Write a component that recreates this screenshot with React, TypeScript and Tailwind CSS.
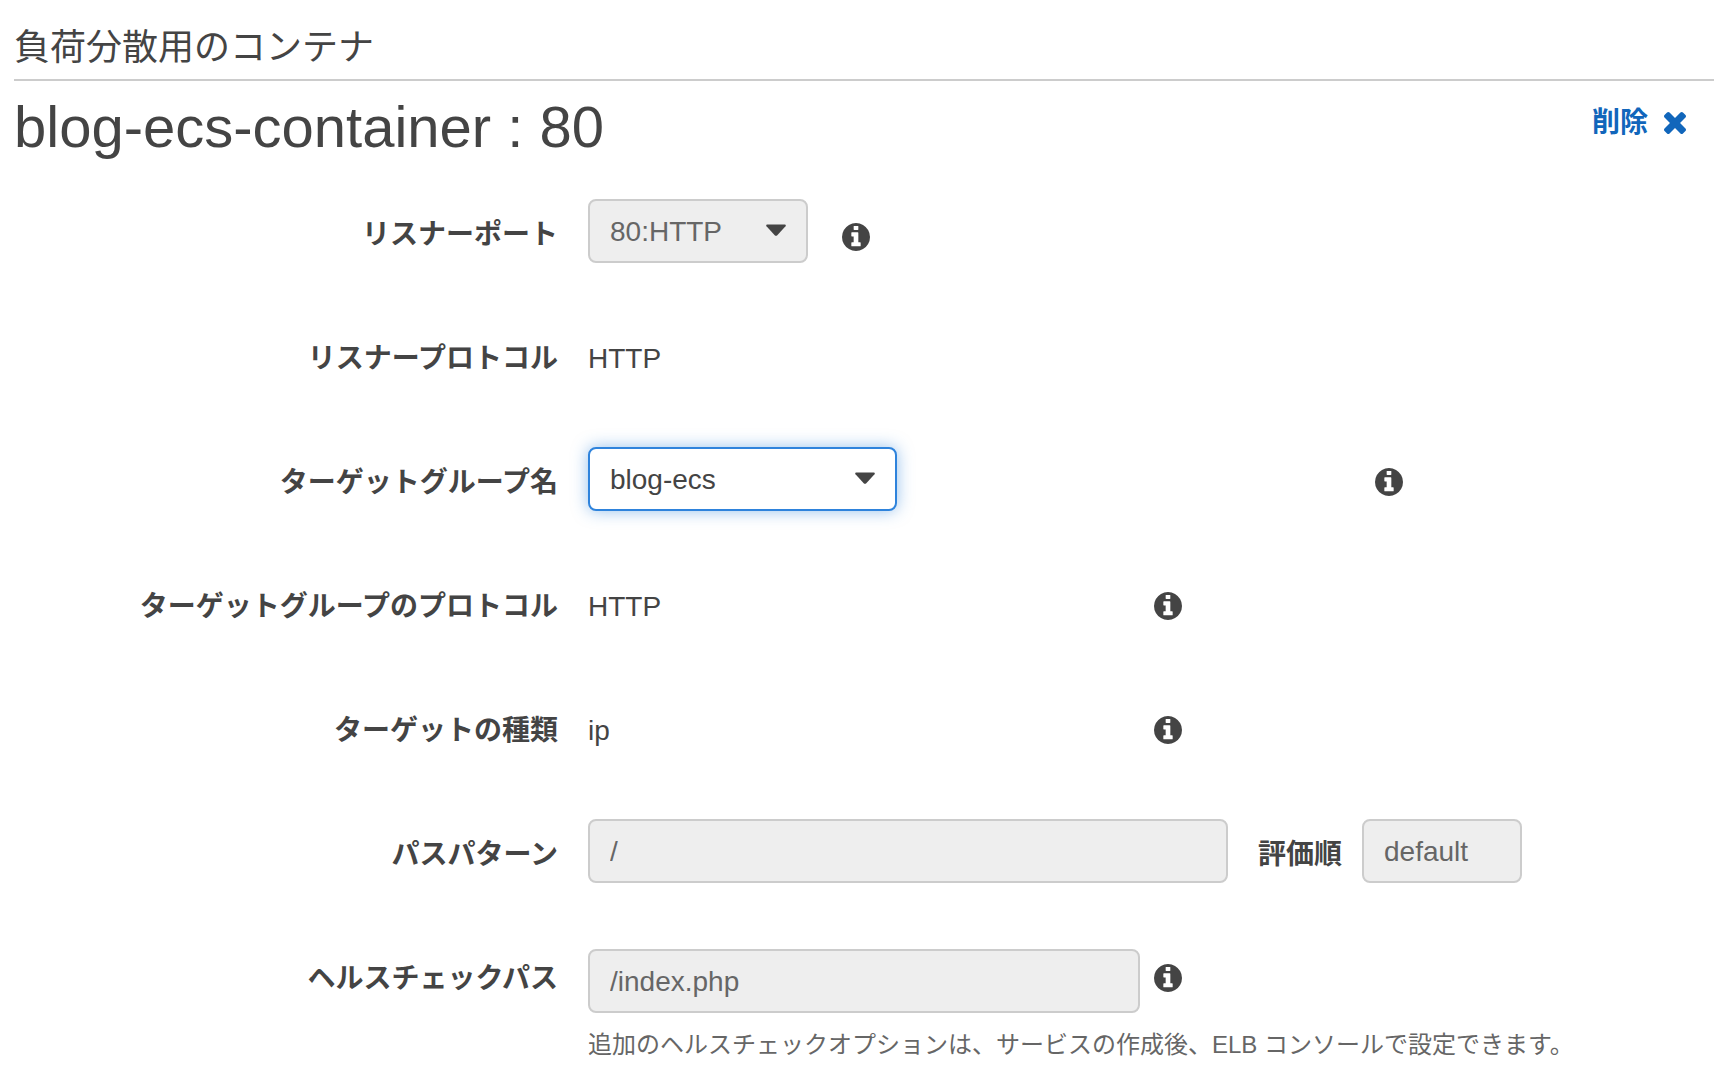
import type { ReactNode } from "react";

function InfoIcon() {
  return (
    <svg className="size-7" viewBox="128 128 1536 1536" fill="currentColor" aria-hidden="true">
      <path d="M1152 1376v-160q0-14-9-23t-23-9h-96v-512q0-14-9-23t-23-9h-320q-14 0-23 9t-9 23v160q0 14 9 23t23 9h96v320h-96q-14 0-23 9t-9 23v160q0 14 9 23t23 9h448q14 0 23-9t9-23zm-128-896v-160q0-14-9-23t-23-9h-192q-14 0-23 9t-9 23v160q0 14 9 23t23 9h192q14 0 23-9t9-23zm640 416q0 209-103 385.5t-279.5 279.5-385.5 103-385.5-103-279.5-279.5-103-385.5 103-385.5 279.5-279.5 385.5-103 385.5 103 279.5 279.5 103 385.5z" />
    </svg>
  );
}

function InfoButton({ className = "mt-[21px]" }: { className?: string }) {
  return (
    <button type="button" aria-label="情報" className={`block size-7 shrink-0 ${className}`}>
      <InfoIcon />
    </button>
  );
}

function TimesIcon() {
  return (
    <svg className="size-[22px]" viewBox="302 366 1188 1188" fill="currentColor" aria-hidden="true">
      <path d="M1490 1322q0 40-28 68l-136 136q-28 28-68 28t-68-28l-294-294-294 294q-28 28-68 28t-68-28l-136-136q-28-28-28-68t28-68l294-294-294-294q-28-28-28-68t28-68l136-136q28-28 68-28t68 28l294 294 294-294q28-28 68-28t68 28l136 136q28 28 28 68t-28 68l-294 294 294 294q28 28 28 68z" />
    </svg>
  );
}

function Caret() {
  return (
    <svg className="pointer-events-none absolute top-[25px] right-[22px] h-3 w-5" viewBox="0 0 20 12" fill="currentColor" aria-hidden="true">
      <path d="M1.3 0.5H18.7Q20.4 0.8 19.5 2.2L11.3 11.2Q10 12.4 8.7 11.2L0.5 2.2Q-0.4 0.8 1.3 0.5Z" />
    </svg>
  );
}

const field = "h-16 min-w-0 rounded-lg border-2 border-[#ccc] bg-[#eee] px-5 pt-0.5 text-[#666] opacity-100";

function Row({ label, htmlFor, children }: { label: string; htmlFor?: string; children: ReactNode }) {
  const labelClass = "block pt-4 leading-10 font-bold";
  return (
    <div className="flex min-h-16 items-start gap-[30px]">
      <div className="w-[32%] shrink-0 text-right">
        {htmlFor ? (
          <label htmlFor={htmlFor} className={labelClass}>
            {label}
          </label>
        ) : (
          <span className={labelClass}>{label}</span>
        )}
      </div>
      <div className="min-w-0 flex-1">{children}</div>
    </div>
  );
}

function StaticValue({ children, info = false }: { children: ReactNode; info?: boolean }) {
  return (
    <div className="flex items-start gap-3.5">
      <span className="block w-[552px] pt-4 leading-10">{children}</span>
      {info && <InfoButton />}
    </div>
  );
}

export default function App() {
  return (
    <main className="min-h-screen bg-white pr-2.5 pl-3.5 font-['Liberation_Sans','Noto_Sans_CJK_JP',sans-serif] text-[28px] text-[#444]">
      <h2 className="border-b-2 border-[#ccc] pt-[22px] pb-[5px] text-[36px] leading-[52px]">負荷分散用のコンテナ</h2>

      <header className="flex items-start justify-between pt-3.5 pr-7">
        <h1 className="text-[58px] leading-[64px]">blog-ecs-container : 80</h1>
        <button type="button" className="mt-2 flex items-center gap-4 leading-10 font-bold text-[#16b]">
          削除
          <TimesIcon />
        </button>
      </header>

      <form className="mt-10 flex flex-col gap-[60px]">
        <Row label="リスナーポート" htmlFor="listener-port">
          <div className="flex items-start gap-[34px]">
            <div className="relative w-[220px]">
              <select id="listener-port" disabled className={`${field} w-full appearance-none`}>
                <option>80:HTTP</option>
              </select>
              <Caret />
            </div>
            <InfoButton className="mt-6" />
          </div>
        </Row>

        <Row label="リスナープロトコル">
          <StaticValue>HTTP</StaticValue>
        </Row>

        <Row label="ターゲットグループ名" htmlFor="target-group">
          <div className="flex items-start gap-3.5">
            <div className="w-[773px]">
              <div className="relative w-[309px]">
                <select
                  id="target-group"
                  className="h-16 w-full appearance-none rounded-lg border-2 border-[#2e83dc] bg-white px-5 pt-0.5 shadow-[0_0_16px_rgba(46,131,220,0.5)] outline-none"
                >
                  <option>blog-ecs</option>
                </select>
                <Caret />
              </div>
            </div>
            <InfoButton />
          </div>
        </Row>

        <Row label="ターゲットグループのプロトコル">
          <StaticValue info>HTTP</StaticValue>
        </Row>

        <Row label="ターゲットの種類">
          <StaticValue info>ip</StaticValue>
        </Row>

        <Row label="パスパターン" htmlFor="path-pattern">
          <div className="flex items-start">
            <input id="path-pattern" type="text" disabled defaultValue="/" className={`${field} w-[640px]`} />
            <label htmlFor="order" className="ml-[30px] shrink-0 pt-4 leading-10 font-bold">
              評価順
            </label>
            <input id="order" type="text" disabled defaultValue="default" className={`${field} ml-5 w-40`} />
          </div>
        </Row>

        <Row label="ヘルスチェックパス" htmlFor="health-path">
          <div className="flex items-start gap-3.5">
            <input
              id="health-path"
              type="text"
              disabled
              defaultValue="/index.php"
              aria-describedby="health-help"
              className={`${field} mt-1.5 w-[552px]`}
            />
            <InfoButton />
          </div>
          <p id="health-help" className="mt-3 text-2xl leading-10 text-[#666]">
            追加のヘルスチェックオプションは、サービスの作成後、ELB コンソールで設定できます。
          </p>
        </Row>
      </form>
    </main>
  );
}
